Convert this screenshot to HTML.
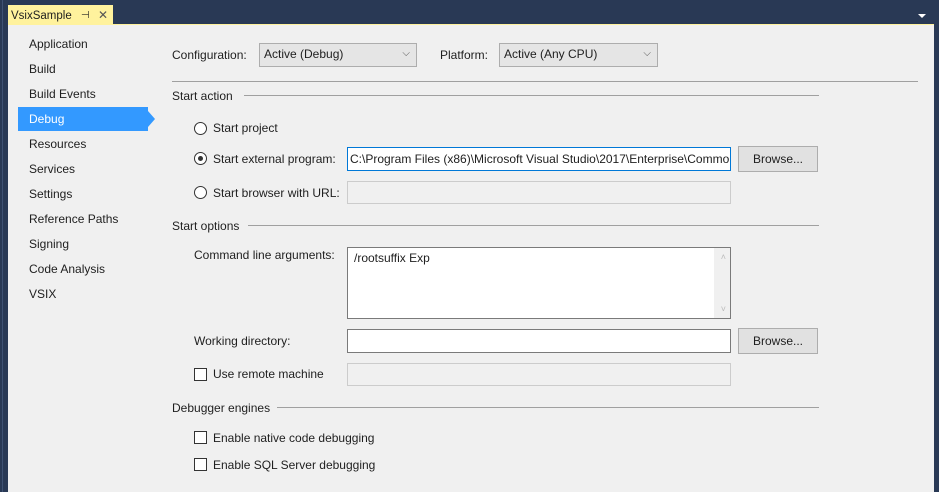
<!DOCTYPE html>
<html><head><style>
*{margin:0;padding:0;box-sizing:border-box}
body{width:939px;height:492px;overflow:hidden;background:#293955;font-family:"Liberation Sans",sans-serif;font-size:12px;color:#1e1e1e;position:relative}
.a{position:absolute;white-space:nowrap}
.t{position:absolute;white-space:nowrap;line-height:14px}
.box{position:absolute;background:#fff;border:1px solid #7a7a7a;white-space:pre}
.dis{position:absolute;background:#f0f0f0;border:1px solid #ccc}
.btn{position:absolute;background:#e1e1e1;border:1px solid #adadad;text-align:center;line-height:22px}
.combo{position:absolute;background:#e5e5e5;border:1px solid #adadad;padding-left:4px;line-height:20px}
.line{position:absolute;height:1px;background:#a0a0a0}
.radio{position:absolute;width:13px;height:13px;border:1px solid #333;border-radius:50%;background:#fff}
.chk{position:absolute;width:13px;height:13px;border:1px solid #333;background:#fff}
</style></head><body>
<div class="a" style="left:2px;top:0;width:1px;height:492px;background:#3f5273"></div>
<div class="a" style="left:8px;top:5px;width:105px;height:20px;background:#fff29d"></div>
<div class="t" style="left:11px;top:9px;color:#1e1e1e;font-size:11.5px">VsixSample</div>
<div class="t" style="left:81px;top:9px;font-size:10px">⊣</div>
<div class="t" style="left:98px;top:8px;font-size:12px;color:#555">✕</div>
<div class="a" style="left:918px;top:14px;width:0;height:0;border-left:4px solid transparent;border-right:4px solid transparent;border-top:4px solid #fff"></div>
<div class="a" style="left:8px;top:24px;width:926px;height:468px;background:#f0f0f0;border-top:1px solid #fff29d"></div>

<div class="a" style="left:18px;top:107px;width:130px;height:24px;background:#3399ff"></div>
<div class="a" style="left:148px;top:111px;width:0;height:0;border-top:8px solid transparent;border-bottom:8px solid transparent;border-left:7px solid #3399ff"></div>
<div class="t" style="left:29px;top:37px">Application</div>
<div class="t" style="left:29px;top:62px">Build</div>
<div class="t" style="left:29px;top:87px">Build Events</div>
<div class="t" style="left:29px;top:112px;color:#fff">Debug</div>
<div class="t" style="left:29px;top:137px">Resources</div>
<div class="t" style="left:29px;top:162px">Services</div>
<div class="t" style="left:29px;top:187px">Settings</div>
<div class="t" style="left:29px;top:212px">Reference Paths</div>
<div class="t" style="left:29px;top:237px">Signing</div>
<div class="t" style="left:29px;top:262px">Code Analysis</div>
<div class="t" style="left:29px;top:287px">VSIX</div>

<div class="t" style="left:172px;top:48px">Configuration:</div>
<div class="combo" style="left:259px;top:43px;width:158px;height:24px">Active (Debug)<span class="a" style="right:6px;top:0;font-size:10px;color:#555">&#x2335;</span></div>
<div class="t" style="left:440px;top:48px">Platform:</div>
<div class="combo" style="left:499px;top:43px;width:159px;height:24px">Active (Any CPU)<span class="a" style="right:6px;top:0;font-size:10px;color:#555">&#x2335;</span></div>
<div class="line" style="left:172px;top:81px;width:746px"></div>

<div class="t" style="left:172px;top:89px">Start action</div>
<div class="line" style="left:244px;top:95px;width:575px"></div>
<div class="radio" style="left:194px;top:122px"></div>
<div class="t" style="left:213px;top:121px">Start project</div>
<div class="radio" style="left:194px;top:152px"><div class="a" style="left:3px;top:3px;width:5px;height:5px;border-radius:50%;background:#333"></div></div>
<div class="t" style="left:213px;top:152px">Start external program:</div>
<div class="box" style="left:347px;top:147px;width:384px;height:24px;border-color:#0078d7;overflow:hidden;padding-left:2px;line-height:22px">C:\Program Files (x86)\Microsoft Visual Studio\2017\Enterprise\Common7\IDE</div>
<div class="btn" style="left:738px;top:146px;width:80px;height:26px;line-height:24px">Browse...</div>
<div class="radio" style="left:194px;top:186px"></div>
<div class="t" style="left:213px;top:186px">Start browser with URL:</div>
<div class="dis" style="left:347px;top:181px;width:384px;height:23px"></div>

<div class="t" style="left:172px;top:219px">Start options</div>
<div class="line" style="left:248px;top:225px;width:571px"></div>
<div class="t" style="left:194px;top:248px">Command line arguments:</div>
<div class="box" style="left:347px;top:247px;width:384px;height:72px;padding:3px 6px;line-height:14px">/rootsuffix Exp
<div class="a" style="right:0;top:0;width:16px;height:70px;background:#f0f0f0"></div>
<div class="a" style="right:4px;top:2px;font-size:9px;color:#bbb">&#x2c4;</div>
<div class="a" style="right:4px;top:54px;font-size:9px;color:#bbb">&#x2c5;</div>
</div>
<div class="t" style="left:194px;top:334px">Working directory:</div>
<div class="box" style="left:347px;top:329px;width:384px;height:24px"></div>
<div class="btn" style="left:738px;top:328px;width:80px;height:26px;line-height:24px">Browse...</div>
<div class="chk" style="left:194px;top:368px"></div>
<div class="t" style="left:213px;top:367px">Use remote machine</div>
<div class="dis" style="left:347px;top:363px;width:384px;height:23px"></div>

<div class="t" style="left:172px;top:401px">Debugger engines</div>
<div class="line" style="left:277px;top:407px;width:542px"></div>
<div class="chk" style="left:194px;top:431px"></div>
<div class="t" style="left:213px;top:431px">Enable native code debugging</div>
<div class="chk" style="left:194px;top:458px"></div>
<div class="t" style="left:213px;top:458px">Enable SQL Server debugging</div>
</body></html>
